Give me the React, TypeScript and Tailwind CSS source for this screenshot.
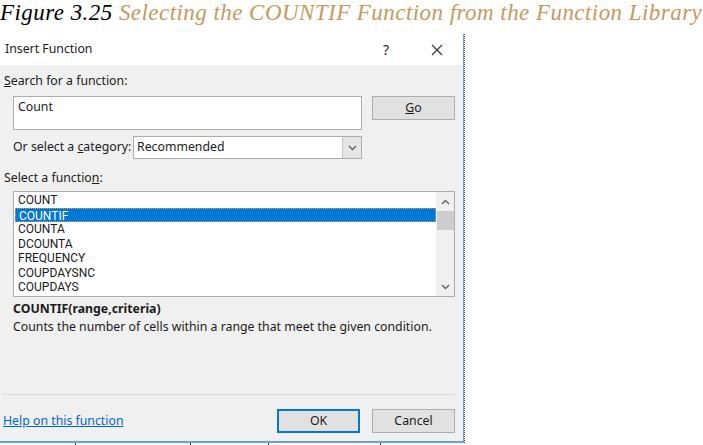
import React from "react"

const ui = { fontFamily: '"Noto Sans", "Open Sans", sans-serif' }
const listFont = { fontFamily: 'Roboto, "Noto Sans", sans-serif' }

const functions = ["COUNT", "COUNTIF", "COUNTA", "DCOUNTA", "FREQUENCY", "COUPDAYSNC", "COUPDAYS"]

const Chevron = ({ up = false }: { up?: boolean }) => (
  <svg width="9" height="6" viewBox="0 0 9 6" className={up ? "rotate-180" : ""}>
    <path d="M1 1l3.5 3.5L8 1" fill="none" stroke="#606060" strokeWidth="1.4" />
  </svg>
)

const Button = ({ children, primary = false, className = "" }: { children: React.ReactNode; primary?: boolean; className?: string }) => (
  <div
    className={`flex h-[24px] w-[83px] items-center justify-center bg-[#e1e1e1] text-[12.3px] text-[#1b1b1b] ${
      primary ? "border-2 border-[#0078d7]" : "border border-[#adadad]"
    } ${className}`}
  >
    {children}
  </div>
)

export default function App() {
  return (
    <div className="relative h-[445px] w-[703px] overflow-hidden bg-white">
      {/* caption */}
      <div
        className="h-[34px] whitespace-nowrap text-[23px] italic leading-[26px] tracking-[0.45px]"
        style={{ fontFamily: '"Liberation Serif", "DejaVu Serif", serif' }}
      >
        <span className="text-black">Figure 3.25 </span>
        <span className="text-[#c49a60]">Selecting the COUNTIF Function from the Function Library</span>
      </div>

      <div className="flex">
        {/* dialog */}
        <div className="w-[464px] border-b-2 border-r border-[#6a9fd8]" style={ui}>
          <div className="flex h-[31px] items-center justify-between bg-white pl-[5px] text-[12.3px] text-[#1b1b1b]">
            <span>Insert Function</span>
            <div className="flex items-center">
              <span className="mr-[42px] text-[14px]">?</span>
              <svg width="12" height="12" viewBox="0 0 12 12" className="mr-[20px]">
                <path d="M1 1l10 10M11 1L1 11" stroke="#333" strokeWidth="1.1" />
              </svg>
            </div>
          </div>

          <div className="flex h-[376px] flex-col bg-[#f0f0f0] text-[12.3px] text-[#1b1b1b]">
            <div className="ml-[4px] mt-[8px] h-[15px] leading-[15px]">
              <span className="underline">S</span>earch for a function:
            </div>

            <div className="mt-[8px] flex items-start">
              <div className="ml-[13px] h-[34px] w-[349px] border border-[#adadad] bg-white px-[4px] leading-[20px]">Count</div>
              <Button className="ml-[10px]">
                <span className="underline">G</span>o
              </Button>
            </div>

            <div className="mt-[6px] flex items-center">
              <span className="ml-[13px] w-[120px]">
                Or select a <span className="underline">c</span>ategory:
              </span>
              <div className="flex h-[23px] w-[229px] items-center border border-[#adadad] bg-white">
                <span className="flex-1 pl-[3px]">Recommended</span>
                <div className="flex h-full w-[19px] items-center justify-center border-l border-[#c4c4c4] bg-[#e6e6e6]">
                  <Chevron />
                </div>
              </div>
            </div>

            <div className="ml-[4px] mt-[11px] h-[15px] leading-[15px]">
              Select a functio<span className="underline">n</span>:
            </div>

            <div className="ml-[13px] mt-[6px] flex h-[106px] w-[442px] border border-[#adadad] bg-white">
              <div className="flex-1 pl-[1px] pt-[1px]" style={listFont}>
                {functions.map((f, i) => (
                  <div
                    key={f}
                    className={`h-[14.5px] pl-[3px] text-[12px] leading-[14.5px] ${
                      i === 1 ? "border border-dotted border-[#e0a060] bg-[#0078d7] pl-[2px] leading-[12.5px] text-white" : ""
                    }`}
                  >
                    {f}
                  </div>
                ))}
              </div>
              <div className="flex w-[18px] flex-col items-center bg-[#f0f0f0]">
                <div className="flex h-[19px] items-center">
                  <Chevron up />
                </div>
                <div className="h-[19px] w-[17px] bg-[#cdcdcd]" />
                <div className="flex-1" />
                <div className="flex h-[18px] items-center">
                  <Chevron />
                </div>
              </div>
            </div>

            <div className="ml-[13px] mt-[4px] h-[15px] font-bold leading-[15px]">COUNTIF(range,criteria)</div>
            <div className="ml-[13px] mt-[3px] h-[15px] leading-[15px]">
              Counts the number of cells within a range that meet the given condition.
            </div>

            <div className="ml-[3px] mt-[60px] h-px w-[452px] bg-[#dcdcdc]" />

            <div className="mt-[14px] flex items-center">
              <span className="ml-[3px] text-[#0066cc] underline">Help on this function</span>
              <div className="flex-1" />
              <Button primary>OK</Button>
              <Button className="ml-[12px] mr-[8px]">Cancel</Button>
            </div>
          </div>
        </div>

        {/* window behind */}
        <div className="w-[2px] border-l border-dotted border-[#3a4a60]" />
      </div>

      {/* gridline ticks below */}
      <div className="flex h-[2px]">
        <div className="ml-[75px] w-px bg-[#333]" />
        <div className="ml-[114px] w-px bg-[#333]" />
        <div className="ml-[77px] w-px bg-[#333]" />
        <div className="ml-[111px] w-px bg-[#333]" />
      </div>
    </div>
  )
}
